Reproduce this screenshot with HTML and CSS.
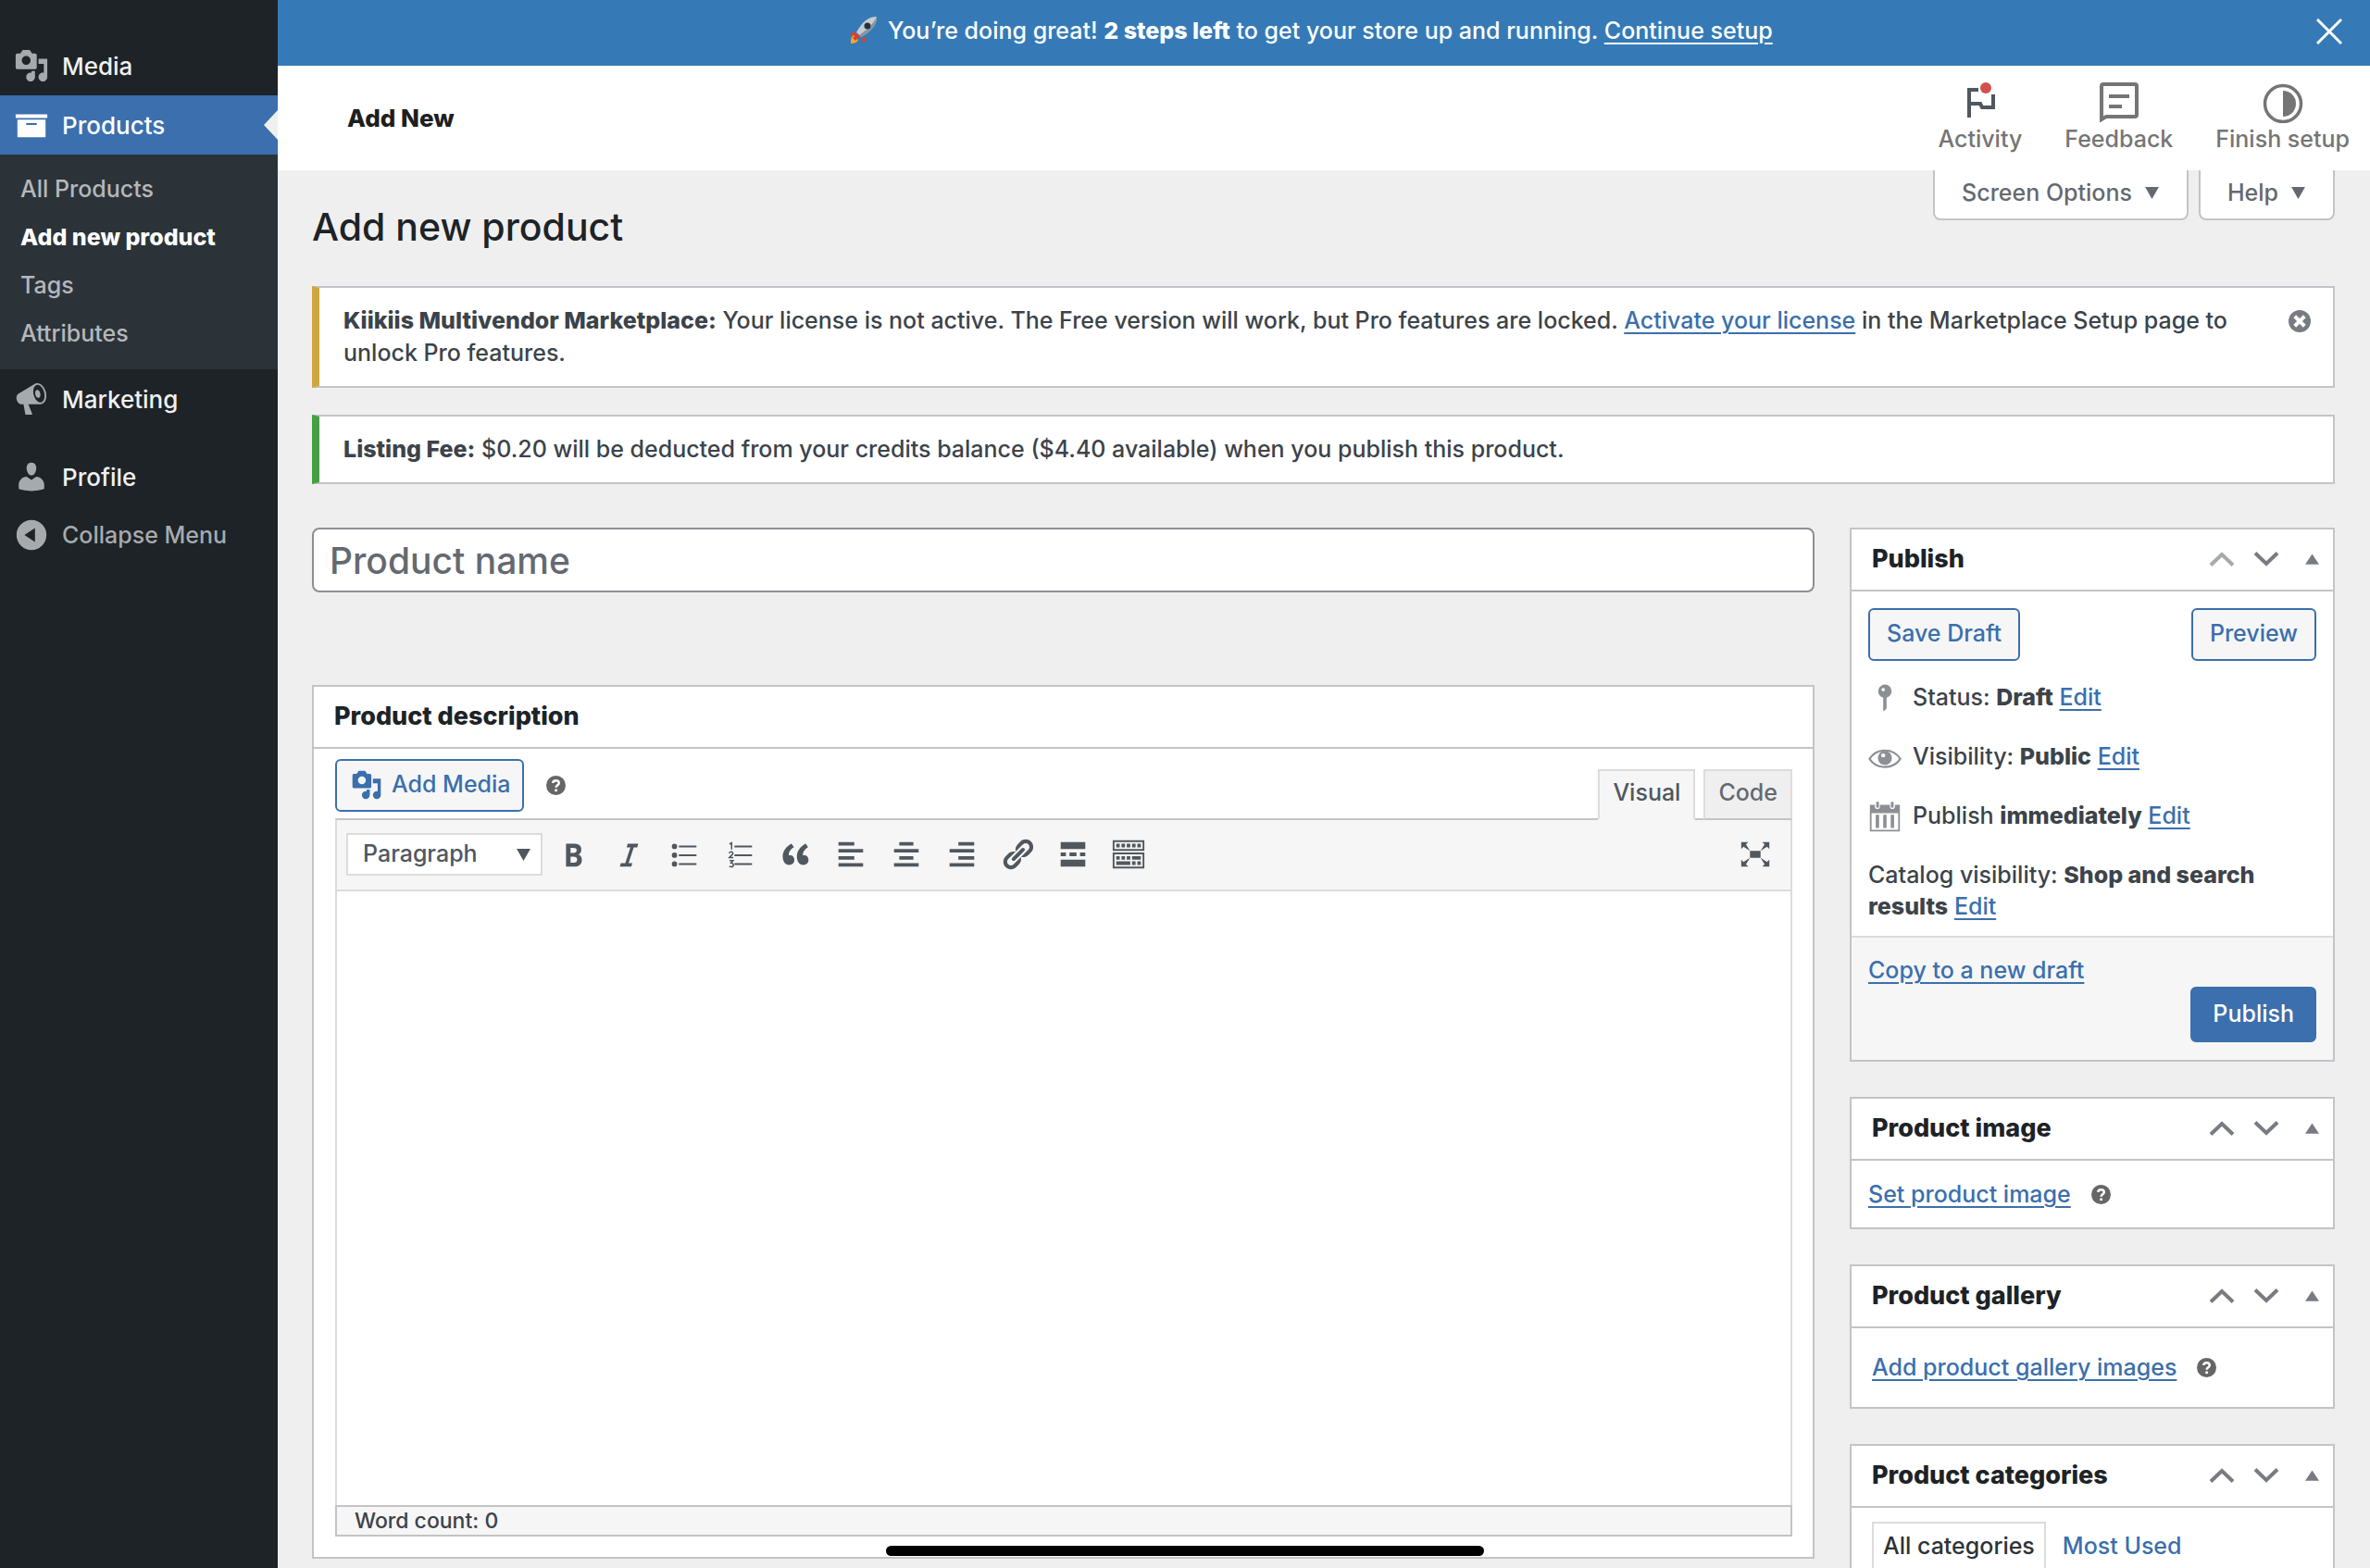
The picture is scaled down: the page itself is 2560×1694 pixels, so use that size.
FILE: index.html
```html
<!DOCTYPE html>
<html lang="en">
<head>
<meta charset="utf-8">
<title>Add new product</title>
<link rel="stylesheet" href="styles.css">
</head>
<body>
<svg class="sprite" aria-hidden="true">
  <symbol id="i-media" viewBox="0 0 20 20"><path d="M13 11V4c0-.55-.45-1-1-1h-1.67L9 1H5L3.67 3H2c-.55 0-1 .45-1 1v7c0 .55.45 1 1 1h10c.55 0 1-.45 1-1zM7 4.5c1.38 0 2.5 1.12 2.5 2.5S8.38 9.5 7 9.5 4.5 8.38 4.5 7 5.62 4.5 7 4.5zM14 6h5v10.5c0 1.38-1.12 2.5-2.5 2.5S14 17.88 14 16.5s1.12-2.5 2.5-2.5c.17 0 .34.02.5.05V9h-3V6zm-4 8.05V13h2v3.5c0 1.38-1.12 2.5-2.5 2.5S7 17.88 7 16.5 8.12 14 9.5 14c.17 0 .34.02.5.05z"/></symbol>
  <symbol id="i-help" viewBox="0 0 20 20"><circle cx="10" cy="10" r="10"/><path d="M6.8 7.6C7 5.7 8.300 4.900 10 4.900c1.800 0 3.100 1 3.100 2.600 0 2.300-3 2.300-3 4.700" fill="none" stroke="#fff" stroke-width="2.400"/><circle cx="10.100" cy="15" r="1.500" fill="#fff"/></symbol>
  <symbol id="i-up" viewBox="0 0 28 18"><path d="M2 15.500 14 4l12 11.500" fill="none" stroke="currentColor" stroke-width="4"/></symbol>
  <symbol id="i-down" viewBox="0 0 28 18"><path d="M2 2.500 14 14 26 2.500" fill="none" stroke="currentColor" stroke-width="4"/></symbol>
  <symbol id="i-tri-up" viewBox="0 0 16 12"><path d="M8 0l8 12H0z"/></symbol>
  <symbol id="i-tri-down" viewBox="0 0 16 14"><path d="M0 0h16L8 14z"/></symbol>
</svg>

<div class="layout">
  <nav class="sidebar">
    <ul class="menu">
      <li><a class="menu-link" href="#"><svg class="menu-icon"><use href="#i-media"/></svg>Media</a></li>
      <li>
        <a class="menu-link current" href="#"><svg class="menu-icon" viewBox="0 0 20 20"><path d="M19 4v2H1V4h18zM2 7h16v10H2V7zm11 3V9H7v1h6z"/></svg>Products</a>
        <ul class="submenu">
          <li><a href="#">All Products</a></li>
          <li><a class="current" href="#">Add new product</a></li>
          <li><a href="#">Tags</a></li>
          <li><a href="#">Attributes</a></li>
        </ul>
      </li>
      <li><a class="menu-link" href="#"><svg class="menu-icon" viewBox="0 0 20 20"><path d="M18.150 5.940c.46 1.620.38 3.220-.02 4.480-.42 1.280-1.260 2.180-2.300 2.480-.16.06-.26.06-.4.06-.06.02-.12.02-.18.02-.06.02-.14.02-.22.02h-6.800l2.220 5.500c.02.14-.06.26-.14.34-.08.1-.24.16-.34.16H6.950c-.1 0-.26-.06-.34-.16-.08-.08-.16-.2-.14-.34l-1-5.500H4.250l-.02-.02c-.5.06-1.080-.18-1.540-.62s-.88-1.080-1.060-1.880c-.24-.8-.2-1.560-.02-2.200.18-.62.58-1.080 1.060-1.300l.02-.02 9-5.400c.1-.06.18-.1.24-.16.06-.04.14-.08.24-.12.16-.08.28-.12.5-.18 1.040-.3 2.240.1 3.220.98s1.840 2.240 2.260 3.860zm-2.580 5.980h-.02c.4-.1.74-.34 1.040-.7.58-.7.86-1.760.86-3.040 0-.64-.1-1.300-.28-1.980-.34-1.360-1.020-2.500-1.780-3.240s-1.680-1.100-2.460-.88c-.82.22-1.400.96-1.700 2-.32 1.040-.28 2.360.06 3.720.38 1.360 1 2.500 1.800 3.240.78.74 1.620 1.100 2.480.88zm-2.540-7.080c.22-.04.42-.02.62.04.38.16.76.48 1.020 1s.42 1.200.42 1.780c0 .3-.04.56-.12.8-.18.48-.44.84-.86.94-.34.1-.8-.06-1.140-.4s-.64-.86-.78-1.500c-.18-.62-.12-1.240.02-1.720s.48-.84.82-.94z"/></svg>Marketing</a></li>
      <li class="separator"></li>
      <li><a class="menu-link" href="#"><svg class="menu-icon" viewBox="0 0 20 20"><path d="M10 9.250c-2.270 0-2.730-3.440-2.730-3.440C7 4.020 7.820 2 9.970 2c2.160 0 2.980 2.020 2.710 3.810 0 0-.41 3.440-2.680 3.440zm0 2.570L12.720 10c2.390 0 4.520 2.330 4.520 4.530v2.490s-3.650 1.130-7.240 1.130c-3.650 0-7.240-1.130-7.240-1.130v-2.490c0-2.250 1.940-4.480 4.470-4.480z"/></svg>Profile</a></li>
      <li><button class="menu-link collapse" type="button"><svg class="menu-icon" viewBox="0 0 20 20"><path fill-rule="evenodd" d="M10 1.500a8.500 8.500 0 1 0 0 17 8.500 8.500 0 0 0 0-17zm2 4.500v8l-6-4z"/></svg>Collapse Menu</button></li>
    </ul>
  </nav>

  <div class="content">
    <div class="setup-bar">
      <p>
        <svg class="rocket" viewBox="0 0 32 32">
          <path d="M7 18c-4 1-6 4-6 4l6 1zM14 25l1 6s3-2 4-6z" fill="#d9402f"/>
          <path d="M5 22l5 5c-1 3-5 4-8 4 0-3 0-7 3-9z" fill="#f7a928"/>
          <path d="M30 2c-9 0-15 5-22 17l5 5C25 17 30 11 30 2z" fill="#c5ccd3"/>
          <path d="M30 2c0 9-5 15-17 22l-2-2C20 16 27 9 30 2z" fill="#8795a1"/>
          <circle cx="20" cy="12" r="3.500" fill="#26323d"/>
          <path d="M9 20l3 3-5 5-3-3z" fill="#d9402f"/>
        </svg>
        You’re doing great! <strong>2 steps left</strong> to get your store up and running. <a href="#">Continue setup</a>
      </p>
      <button class="close" type="button" aria-label="Dismiss"><svg viewBox="0 0 28 28"><path d="M1 1l26 26M27 1L1 27" stroke="#fff" stroke-width="3"/></svg></button>
    </div>

    <header class="page-header">
      <h2>Add New</h2>
      <div class="header-actions">
        <button type="button"><svg viewBox="0 0 44 44"><path d="M10 38V8h10M10 23h12l2 4h12V13" fill="none" stroke="#50575e" stroke-width="4"/><circle cx="28" cy="6" r="6" fill="#d0504b"/></svg>Activity</button>
        <button type="button"><svg viewBox="0 0 44 44"><path d="M3 40V4q0-2 2-2h34q2 0 2 2v31q0 2-2 2H8z" fill="none" stroke="#757575" stroke-width="4"/><path d="M11 15h22M11 26h14" stroke="#757575" stroke-width="4"/></svg>Feedback</button>
        <button type="button"><svg viewBox="0 0 44 44"><circle cx="22" cy="23" r="19.500" fill="none" stroke="#757575" stroke-width="3.500"/><path d="M22 9a14 14 0 0 1 0 28z" fill="#757575"/></svg>Finish setup</button>
      </div>
    </header>

    <main class="wrap">
      <div class="title-row">
        <h1>Add new product</h1>
        <div class="screen-meta">
          <button type="button">Screen Options<svg><use href="#i-tri-down"/></svg></button>
          <button type="button">Help<svg><use href="#i-tri-down"/></svg></button>
        </div>
      </div>

      <div class="notice warning">
        <p><strong>Kiikiis Multivendor Marketplace:</strong> Your license is not active. The Free version will work, but Pro features are locked. <a href="#">Activate your license</a> in the Marketplace Setup page to unlock Pro features.</p>
        <button class="dismiss" type="button" aria-label="Dismiss this notice"><svg viewBox="0 0 16 16"><circle cx="8" cy="8" r="8"/><path d="M4.500 4.500l7 7M11.500 4.500l-7 7" stroke="#fff" stroke-width="2.600"/></svg></button>
      </div>
      <div class="notice success">
        <p><strong>Listing Fee:</strong> $0.20 will be deducted from your credits balance ($4.40 available) when you publish this product.</p>
      </div>

      <div class="columns">
        <div class="col-main">
          <input class="title-input" type="text" aria-label="Product name" placeholder="Product name">

          <section class="postbox">
            <div class="postbox-header"><h2>Product description</h2></div>
            <div class="editor">
              <div class="editor-tools">
                <div class="media-buttons">
                  <button class="button" type="button"><svg class="media-icon"><use href="#i-media"/></svg>Add Media</button>
                  <svg class="help"><use href="#i-help"/></svg>
                </div>
                <div class="editor-tabs">
                  <button class="active" type="button">Visual</button>
                  <button type="button">Code</button>
                </div>
              </div>
              <div class="toolbar">
                <div class="format">
                  <select aria-label="Format"><option>Paragraph</option></select>
                  <svg><use href="#i-tri-down"/></svg>
                </div>
                <button type="button" aria-label="Bold"><svg viewBox="0 0 20 20"><path d="M6 4v13h4.540c1.370 0 2.460-.33 3.260-1 .8-.66 1.200-1.580 1.200-2.770 0-.84-.17-1.510-.51-2.010s-.9-.85-1.670-1.030v-.09c.57-.1 1.020-.4 1.360-.9s.51-1.130.51-1.910c0-1.140-.39-1.980-1.170-2.500C12.750 4.260 11.500 4 9.780 4H6zm2.570 5.150V6.260h1.360c.73 0 1.270.11 1.610.32.34.22.51.58.51 1.070 0 .54-.16.92-.47 1.150s-.82.35-1.510.35h-1.500zm0 2.190h1.600c1.440 0 2.160.53 2.160 1.610 0 .6-.17 1.050-.51 1.340s-.86.43-1.570.43H8.570v-3.380z"/></svg></button>
                <button type="button" aria-label="Italic"><svg viewBox="0 0 20 20"><path d="M15.500 4h-6l-.62 2h2.130l-2.900 9H5.600L5 17h6.500l.62-2H10l2.900-9h2z"/></svg></button>
                <button type="button" aria-label="Bulleted list"><svg viewBox="0 0 20 20"><circle cx="4.500" cy="5.500" r="1.500"/><circle cx="4.500" cy="10.500" r="1.500"/><circle cx="4.500" cy="15.500" r="1.500"/><path d="M7 5h10v1H7zM7 10h10v1H7zM7 15h10v1H7z"/></svg></button>
                <button type="button" aria-label="Numbered list"><svg viewBox="0 0 20 20"><path d="M7 5h10v1H7zM7 10h10v1H7zM7 15h10v1H7z"/><path d="M4.200 4.200 5.400 3.500v3.700M4.100 9.400c.3-1.300 2.300-1 2 .2-.2.800-1.300 1.300-2 2.200h2.300M4.200 13.600h2l-1.100 1.300c1.800 0 1.700 2.200 0 2.200q-.6 0-1-.3" fill="none" stroke="currentColor" stroke-width=".8"/></svg></button>
                <button type="button" aria-label="Blockquote"><svg viewBox="0 0 20 20"><path d="M9.490 13.220c0-.74-.2-1.380-.61-1.900-.62-.78-1.830-.88-2.530-.72-.29-1.650 1.110-3.750 2.920-4.650L7.880 4c-2.730 1.300-5.420 4.280-4.960 8.050C3.210 14.430 4.590 16 6.540 16c.85 0 1.560-.25 2.120-.75s.83-1.180.83-2.030zm8.050 0c0-.74-.2-1.380-.61-1.900-.63-.78-1.830-.88-2.530-.72-.29-1.650 1.110-3.750 2.920-4.650L15.930 4c-2.730 1.300-5.410 4.280-4.950 8.050.29 2.380 1.660 3.950 3.610 3.950.85 0 1.560-.25 2.120-.75s.83-1.180.83-2.030z"/></svg></button>
                <button type="button" aria-label="Align left"><svg viewBox="0 0 20 20"><path d="M12 5V3H3v2h9zm5 4V7H3v2h14zm-5 4v-2H3v2h9zm5 4v-2H3v2h14z"/></svg></button>
                <button type="button" aria-label="Align center"><svg viewBox="0 0 20 20"><path d="M14 5V3H6v2h8zm3 4V7H3v2h14zm-3 4v-2H6v2h8zm3 4v-2H3v2h14z"/></svg></button>
                <button type="button" aria-label="Align right"><svg viewBox="0 0 20 20"><path d="M17 5V3H8v2h9zm0 4V7H3v2h14zm0 4v-2H8v2h9zm0 4v-2H3v2h14z"/></svg></button>
                <button type="button" aria-label="Link"><svg viewBox="0 0 20 20"><path d="M17.740 2.760c1.680 1.690 1.680 4.410 0 6.100l-1.530 1.520c-1.120 1.120-2.700 1.470-4.140 1.090l2.620-2.610.76-.77.76-.76c.84-.84.84-2.200 0-3.040-.84-.85-2.200-.85-3.040 0l-.77.76-3.380 3.380c-.37-1.440-.02-3.020 1.100-4.140l1.520-1.530c1.690-1.680 4.420-1.680 6.100 0zM8.590 13.430l5.340-5.340c.42-.42.42-1.100 0-1.520-.44-.43-1.130-.39-1.530 0l-5.330 5.340c-.42.42-.42 1.100 0 1.520.44.43 1.130.39 1.520 0zm-.76 2.290l4.140-4.150c.38 1.440.03 3.020-1.090 4.140l-1.520 1.530c-1.690 1.680-4.410 1.680-6.100 0-1.680-1.680-1.680-4.420 0-6.100l1.530-1.520c1.120-1.120 2.700-1.470 4.140-1.100l-4.140 4.150c-.85.84-.85 2.200 0 3.050.84.84 2.200.84 3.040 0z"/></svg></button>
                <button type="button" aria-label="Read more"><svg viewBox="0 0 20 20"><path d="M17 7V3H3v4h14zM6 11V9H3v2h3zm6 0V9H8v2h4zm5 0V9h-3v2h3zm0 6v-4H3v4h14z"/></svg></button>
                <button type="button" aria-label="Toolbar toggle"><svg viewBox="0 0 20 20"><path d="M1.500 2.500h17v5h-17zM1.500 9.500h17v8h-17z" fill="none" stroke="currentColor"/><path d="M3 4h2v2H3zM6 4h2v2H6zM9 4h2v2H9zM12 4h2v2h-2zM15 4h2v2h-2zM3 11h2v2H3zM6 11h2v2H6zM9 11h2v2H9zM12 11h5v2h-5zM3 14h8v2H3zM12 14h2v2h-2zM15 14h2v2h-2z"/></svg></button>
                <button class="fullscreen" type="button" aria-label="Distraction-free"><svg viewBox="0 0 20 20"><path d="M7 8h6v4H7zM2 17v-4l1.300 1.300L7 12l-2.300 3.700L6 17zM18 17h-4l1.300-1.300L13 12l3.700 2.300L18 13zM18 3v4l-1.300-1.300L13 8l2.300-3.700L14 3zM2 3h4L4.700 4.300 7 8 3.300 5.700 2 7z"/></svg></button>
              </div>
              <textarea class="editor-area" aria-label="Product description"></textarea>
              <div class="status-bar">Word count: 0</div>
            </div>
          </section>
        </div>

        <aside class="col-side">
          <section class="postbox">
            <div class="postbox-header">
              <h2>Publish</h2>
              <div class="handles">
                <button class="disabled" type="button" aria-label="Move up"><svg><use href="#i-up"/></svg></button>
                <button type="button" aria-label="Move down"><svg><use href="#i-down"/></svg></button>
                <button class="toggle" type="button" aria-label="Toggle panel"><svg><use href="#i-tri-up"/></svg></button>
              </div>
            </div>
            <div class="minor-actions">
              <button class="button" type="button">Save Draft</button>
              <button class="button" type="button">Preview</button>
            </div>
            <ul class="misc">
              <li><svg viewBox="0 0 20 20"><path d="M14 6c0 1.860-1.280 3.410-3 3.860V16c0 1-2 2-2 2V9.860C7.280 9.410 6 7.860 6 6c0-2.210 1.790-4 4-4s4 1.790 4 4zM8 5c0 .55.45 1 1 1s1-.45 1-1-.45-1-1-1-1 .45-1 1z"/></svg><span>Status: <strong>Draft</strong> <a href="#">Edit</a></span></li>
              <li><svg viewBox="0 0 20 20"><path d="M.8 11C5 4.300 15 4.300 19.200 11C15 17.500 5 17.500 .8 11z" fill="none" stroke="currentColor" stroke-width="1.200"/><circle cx="10" cy="10.500" r="4.200"/><circle cx="9" cy="9" r="1.200" fill="#fff"/></svg><span>Visibility: <strong>Public</strong> <a href="#">Edit</a></span></li>
              <li><svg viewBox="0 0 20 20"><path fill-rule="evenodd" d="M1 3h3v1.500q0 1 1 1h1q1 0 1-1V3h6v1.500q0 1 1 1h1q1 0 1-1V3h3v16H1zM2 8v10h16V8z"/><path d="M4.800 1.200h1.600v3.500H4.800zM13.600 1.200h1.600v3.500h-1.600zM4.500 9h2v8h-2zM9 9h2v8H9zM13.500 9h2v8h-2z"/></svg><span>Publish <strong>immediately</strong> <a href="#">Edit</a></span></li>
              <li><span>Catalog visibility: <strong>Shop and search results</strong> <a href="#">Edit</a></span></li>
            </ul>
            <div class="major-actions">
              <a href="#">Copy to a new draft</a>
              <button class="button primary" type="button">Publish</button>
            </div>
          </section>

          <section class="postbox">
            <div class="postbox-header">
              <h2>Product image</h2>
              <div class="handles">
                <button type="button" aria-label="Move up"><svg><use href="#i-up"/></svg></button>
                <button type="button" aria-label="Move down"><svg><use href="#i-down"/></svg></button>
                <button class="toggle" type="button" aria-label="Toggle panel"><svg><use href="#i-tri-up"/></svg></button>
              </div>
            </div>
            <div class="inside"><a href="#">Set product image</a><svg class="help"><use href="#i-help"/></svg></div>
          </section>

          <section class="postbox">
            <div class="postbox-header">
              <h2>Product gallery</h2>
              <div class="handles">
                <button type="button" aria-label="Move up"><svg><use href="#i-up"/></svg></button>
                <button type="button" aria-label="Move down"><svg><use href="#i-down"/></svg></button>
                <button class="toggle" type="button" aria-label="Toggle panel"><svg><use href="#i-tri-up"/></svg></button>
              </div>
            </div>
            <div class="inside gallery"><a href="#">Add product gallery images</a><svg class="help"><use href="#i-help"/></svg></div>
          </section>

          <section class="postbox">
            <div class="postbox-header">
              <h2>Product categories</h2>
              <div class="handles">
                <button type="button" aria-label="Move up"><svg><use href="#i-up"/></svg></button>
                <button type="button" aria-label="Move down"><svg><use href="#i-down"/></svg></button>
                <button class="toggle" type="button" aria-label="Toggle panel"><svg><use href="#i-tri-up"/></svg></button>
              </div>
            </div>
            <div class="categories">
              <div class="category-tabs">
                <button class="active" type="button">All categories</button>
                <button type="button">Most Used</button>
              </div>
              <div class="category-panel"></div>
            </div>
          </section>
        </aside>
      </div>
    </main>
  </div>
</div>
<div class="home-indicator"></div>
</body>
</html>
```

FILE: styles.css
```css
* {
  box-sizing: border-box;
}
body {
  margin: 0;
  height: 100vh;
  overflow: hidden;
  background: #efefef;
  color: #3c434a;
  font: 500 25px/35px Inter, "Liberation Sans", sans-serif;
}
h1, h2, p, ul {
  margin: 0;
  padding: 0;
}
ul {
  list-style: none;
}
strong {
  font-weight: 800;
}
a {
  color: #3b6fad;
  text-decoration-thickness: 2px;
  text-underline-offset: 4px;
}
button, input, select, textarea {
  font: inherit;
  color: inherit;
}
button {
  padding: 0;
  border: none;
  background: none;
  white-space: nowrap;
}
svg {
  display: block;
  flex: none;
  fill: currentColor;
}
.sprite {
  position: absolute;
  width: 0;
  height: 0;
}
.layout {
  display: flex;
  min-height: 100vh;
}

/* admin menu */
.sidebar {
  flex: none;
  width: 300px;
  padding-top: 39px;
  background: #1d2327;
}
.menu-link {
  display: flex;
  align-items: center;
  gap: 14px;
  width: 100%;
  height: 64px;
  padding-left: 15px;
  color: #f0f0f1;
  font-size: 26px;
  text-decoration: none;
}
.menu-icon {
  width: 38px;
  height: 38px;
  color: #a7aaad;
}
.menu-link.current {
  position: relative;
  background: #3b6fad;
  color: #fff;
}
.menu-link.current .menu-icon {
  color: #fff;
}
.menu-link.current::after {
  content: "";
  position: absolute;
  right: 0;
  top: 16px;
  border: 16px solid transparent;
  border-left: none;
  border-right: 15px solid #efefef;
}
.menu-link.collapse {
  height: 62px;
  color: #a7aaad;
  font-size: 25px;
}
.submenu {
  padding: 11px 0 13px;
  background: #2c3338;
}
.submenu a {
  display: block;
  padding-left: 22px;
  color: #b4b8bc;
  line-height: 52px;
  text-decoration: none;
}
.submenu .current {
  color: #fff;
  font-weight: 800;
}
.separator {
  height: 20px;
}

/* top bars */
.content {
  flex: 1;
  min-width: 0;
}
.setup-bar {
  display: flex;
  align-items: center;
  height: 71px;
  padding: 0 30px 4px;
  background: #357ab6;
  color: #fff;
}
.setup-bar p {
  flex: 1;
  text-align: center;
}
.setup-bar a {
  color: #fff;
}
.rocket {
  display: inline-block;
  width: 32px;
  height: 32px;
  margin-right: 3px;
  vertical-align: -6px;
}
.close svg {
  width: 28px;
  height: 28px;
}
.page-header {
  display: flex;
  align-items: center;
  justify-content: space-between;
  height: 113px;
  padding: 0 22px 0 75px;
  background: #fff;
}
.page-header h2 {
  color: #1e1e1e;
  font-size: 26px;
  font-weight: 800;
}
.header-actions {
  display: flex;
  gap: 46px;
}
.header-actions button {
  display: flex;
  flex-direction: column;
  align-items: center;
  color: #757575;
}
.header-actions svg {
  width: 44px;
  height: 44px;
  margin-top: 2px;
}

/* page */
.wrap {
  padding: 0 38px 0 37px;
}
.title-row {
  display: flex;
  justify-content: space-between;
  align-items: flex-start;
  height: 125px;
}
h1 {
  padding-top: 34px;
  color: #1d2327;
  font-size: 41px;
  font-weight: 500;
  line-height: 54px;
}
.screen-meta {
  display: flex;
  gap: 11px;
}
.screen-meta button {
  display: flex;
  align-items: center;
  gap: 14px;
  height: 54px;
  padding: 0 30px 4px 29px;
  border: 2px solid #c3c4c7;
  border-top: none;
  border-radius: 0 0 8px 8px;
  background: #fff;
  color: #646970;
}
.screen-meta svg {
  width: 15px;
  height: 13px;
}
.notice {
  display: flex;
  justify-content: space-between;
  align-items: flex-start;
  margin-bottom: 29px;
  padding: 18px 24px;
  border: 2px solid #c3c4c7;
  border-left-width: 8px;
  background: #fff;
}
.notice p {
  padding-left: 2px;
}
.warning {
  border-left-color: #d0a73f;
}
.warning p {
  margin-right: 48px;
}
.success {
  border-left-color: #479f41;
}
.dismiss {
  padding-top: 6px;
  color: #787c82;
}
.dismiss svg {
  width: 24px;
  height: 24px;
}
.columns {
  display: flex;
  gap: 38px;
  padding-top: 18px;
}
.col-main {
  flex: 1;
  min-width: 0;
}
.col-side {
  flex: none;
  width: 524px;
}
.title-input {
  display: block;
  width: 100%;
  height: 70px;
  margin-bottom: 100px;
  padding: 0 17px;
  border: 2px solid #8c8f94;
  border-radius: 8px;
  background: #fff;
  font-size: 39px;
}
.title-input::placeholder {
  color: #646970;
  opacity: 1;
}

/* boxes */
.postbox {
  margin-bottom: 38px;
  border: 2px solid #c3c4c7;
  background: #fff;
}
.postbox-header {
  display: flex;
  justify-content: space-between;
  align-items: center;
  height: 67px;
  padding: 0 15px 2px 22px;
  border-bottom: 2px solid #c3c4c7;
}
.postbox-header h2 {
  color: #1d2327;
  font-size: 27px;
  font-weight: 800;
}
.handles {
  display: flex;
  align-items: center;
  gap: 20px;
  color: #787c82;
}
.handles svg {
  width: 28px;
  height: 18px;
}
.handles .disabled {
  color: #a7aaad;
}
.handles .toggle {
  padding-left: 8px;
}
.handles .toggle svg {
  width: 15px;
  height: 12px;
}
.button {
  display: flex;
  align-items: center;
  height: 57px;
  padding: 0 18px 2px;
  border: 2px solid #3b6fad;
  border-radius: 6px;
  background: #f6f6f6;
  color: #3b6fad;
}
.primary {
  height: 60px;
  padding: 0 22px 2px;
  background: #3b6fad;
  color: #fff;
}
.help {
  width: 21px;
  height: 21px;
  color: #666;
}

/* editor */
.editor {
  padding: 11px 22px 22px 23px;
}
.editor-tools {
  display: flex;
  justify-content: space-between;
}
.media-buttons {
  display: flex;
  align-items: center;
  gap: 24px;
  height: 57px;
}
.media-buttons .button {
  gap: 10px;
  padding: 0 12px 2px 15px;
}
.media-icon {
  width: 34px;
  height: 34px;
}
.editor-tabs {
  display: flex;
  align-items: flex-end;
  gap: 9px;
  margin: 11px 0 -2px;
}
.editor-tabs button {
  position: relative;
  height: 55px;
  padding: 0 14px 4px;
  border: 2px solid #dcdcde;
  border-bottom-color: #c3c4c7;
  background: #efefef;
  color: #646970;
}
.editor-tabs .active {
  border-bottom-color: #f6f6f6;
  background: #f6f6f6;
  color: #50575e;
}
.toolbar {
  display: flex;
  align-items: center;
  height: 79px;
  padding: 0 8px 2px 10px;
  border: 2px solid #dcdcde;
  border-top-color: #c3c4c7;
  background: #f6f6f6;
  color: #50575e;
}
.toolbar button {
  display: flex;
  justify-content: center;
  width: 60px;
}
.toolbar button svg {
  width: 38px;
  height: 38px;
}
.toolbar .fullscreen {
  margin-left: auto;
}
.format {
  position: relative;
  margin-right: 3px;
}
.format select {
  display: block;
  width: 212px;
  height: 46px;
  padding: 0 16px;
  border: 2px solid #dcdcde;
  border-radius: 0;
  background: #fff;
  appearance: none;
}
.format svg {
  position: absolute;
  right: 13px;
  top: 17px;
  width: 15px;
  height: 13px;
}
.editor-area {
  display: block;
  width: 100%;
  height: 663px;
  border: 2px solid #dcdcde;
  border-width: 0 2px;
  background: #fff;
  resize: none;
}
.status-bar {
  padding: 0 19px;
  border: 2px solid #c3c4c7;
  background: #f6f6f6;
  font-size: 23px;
  line-height: 30px;
}

/* publish */
.minor-actions {
  display: flex;
  justify-content: space-between;
  padding: 18px 18px 12px;
}
.misc {
  line-height: 34px;
}
.misc li {
  display: flex;
  gap: 12px;
  padding: 10px 18px 20px;
}
.misc li:last-child {
  padding-bottom: 15px;
}
.misc svg {
  width: 36px;
  height: 36px;
  margin-bottom: -2px;
  color: #8c8f94;
}
.major-actions {
  padding: 18px 18px 19px;
  border-top: 2px solid #dcdcde;
  background: #f6f6f6;
}
.major-actions .primary {
  margin-left: auto;
}
.inside {
  display: flex;
  align-items: center;
  gap: 22px;
  padding: 19px 18px 18px;
}
.gallery {
  padding: 25px 22px;
}
.categories {
  padding: 15px 22px;
}
.category-tabs {
  display: flex;
}
.category-tabs button {
  height: 52px;
  padding: 0 10px 2px;
  border: 2px solid transparent;
  border-bottom: none;
  color: #3b6fad;
}
.category-tabs .active {
  position: relative;
  margin: 0 6px -2px 0;
  border-color: #dcdcde;
  background: #fff;
  color: #2c3338;
}
.category-panel {
  height: 340px;
  border: 2px solid #dcdcde;
}

.home-indicator {
  position: fixed;
  left: 50%;
  bottom: 13px;
  width: 646px;
  height: 11px;
  border-radius: 6px;
  background: #000;
  transform: translateX(-50%);
}
```
